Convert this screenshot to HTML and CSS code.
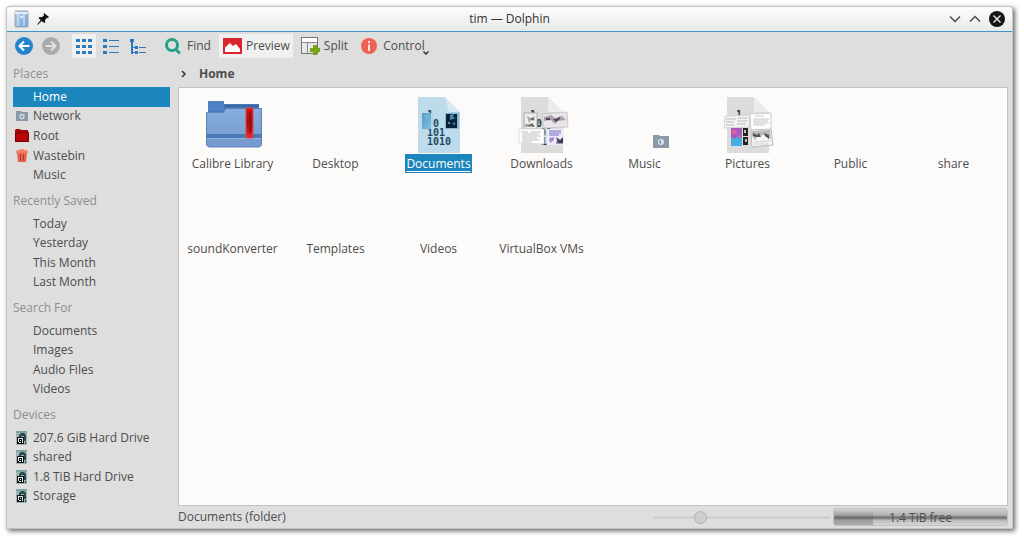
FILE: index.html
```html
<!DOCTYPE html>
<html lang="en">
<head>
  <meta charset="UTF-8">
  <title>tim — Dolphin</title>
  <link rel="stylesheet" href="styles.css">
</head>
<body>
  <!-- shared symbols -->
  <svg class="defs" aria-hidden="true">
    <defs>
      <linearGradient id="blue" x1="0" y1="0" x2="0" y2="1">
        <stop offset="0" stop-color="#86aede"/><stop offset="1" stop-color="#7599ca"/>
      </linearGradient>
      <linearGradient id="ribbon" x1="0" y1="0" x2="0" y2="1">
        <stop offset="0" stop-color="#e01212"/><stop offset="0.5" stop-color="#a80a0a"/><stop offset="1" stop-color="#e8282a"/>
      </linearGradient>
      <linearGradient id="cabinet" x1="0" y1="0" x2="1" y2="1">
        <stop offset="0" stop-color="#b9d3ee"/><stop offset="1" stop-color="#6fa3d8"/>
      </linearGradient>
      <linearGradient id="sky" x1="0" y1="0" x2="1" y2="1">
        <stop offset="0" stop-color="#4c9bc6"/><stop offset="1" stop-color="#8fc4e2"/>
      </linearGradient>
    </defs>
    <symbol id="drive" viewBox="0 0 11 14">
      <rect width="11" height="14" fill="#9db4b5"/>
      <path d="M0 0h11v2H0z" fill="#7fa3a3"/>
      <path d="M3 4l2-2h3l2 2v6H8V5H5v1H3z" fill="#294a50"/>
      <path d="M1 6h7v7H1z" fill="#111"/>
      <path d="M2 7h5v1H2zM2 8h1v3H2zM6 8h1v4H6zM3 11h2v1H3zM4 9h1v1H4z" fill="#e4eeee"/>
      <path d="M9 11h1v2H9z" fill="#243c3f"/>
    </symbol>
  </svg>

  <div class="window">
    <header class="titlebar">
      <div class="title-left">
        <svg width="16" height="18" viewBox="0 0 16 18">
          <rect x="1" y="1" width="13" height="16" rx="1" fill="url(#cabinet)" stroke="#9aa5b0"/>
          <path d="M4 2v14M10 2v14" stroke="#e4f0fb" stroke-width="1"/>
          <path d="M1 3h13" stroke="#e8edf2" stroke-width="2"/>
          <path d="M6 6h3v2H6z" fill="#dcecfa"/>
        </svg>
        <svg width="12" height="12" viewBox="0 0 12 12">
          <path d="M7 0l5 4-1 1-1-0.3L8 7l0.2 2.2L7.200 10 4.800 8 1 11.500 0 12l0.500-1L3.700 7.100 1.500 5l1-1L5 4.200 7.200 2 6.500 1z" fill="#111"/>
        </svg>
      </div>
      <h1>tim — Dolphin</h1>
      <div class="title-buttons">
        <button aria-label="Minimize"><svg width="12" height="8" viewBox="0 0 12 8"><path d="M1 1.500l5 5 5-5" fill="none" stroke="#444" stroke-width="1.300"/></svg></button>
        <button aria-label="Maximize"><svg width="12" height="8" viewBox="0 0 12 8"><path d="M1 6.500l5-5 5 5" fill="none" stroke="#444" stroke-width="1.300"/></svg></button>
        <button aria-label="Close"><svg width="16" height="16" viewBox="0 0 16 16"><circle cx="8" cy="8" r="8" fill="#151515"/><path d="M4.500 4.500l7 7M11.500 4.500l-7 7" stroke="#f4f4f4" stroke-width="1.300"/></svg></button>
      </div>
    </header>

    <nav class="toolbar">
      <button aria-label="Back"><svg width="18" height="18" viewBox="0 0 18 18"><circle cx="9" cy="9" r="9" fill="#2384ce"/><path d="M14.500 9h-10M9 4.500L4.500 9 9 13.500" fill="none" stroke="#fff" stroke-width="2"/></svg></button>
      <button aria-label="Forward" class="forward"><svg width="18" height="18" viewBox="0 0 18 18"><circle cx="9" cy="9" r="9" fill="#aaa"/><path d="M3.500 9h10M9 4.500l4.500 4.500L9 13.500" fill="none" stroke="#e0e0e0" stroke-width="2"/></svg></button>
      <button aria-label="Icons" class="mode active"><svg width="16" height="17" viewBox="0 0 16 17"><path d="M0 1h4v3H0zM6 1h4v3H6zM12 1h4v3h-4zM0 7h4v3H0zM6 7h4v3H6zM12 7h4v3h-4zM0 13h4v3H0zM6 13h4v3H6zM12 13h4v3h-4z" fill="#2c78bd"/></svg></button>
      <button aria-label="Compact" class="mode"><svg width="16" height="17" viewBox="0 0 16 17"><path d="M0 1h4v3H0zM0 7h4v3H0zM0 13h4v3H0zM6 2h10v1H6zM6 8h10v1H6zM6 14h10v1H6z" fill="#2c78bd"/></svg></button>
      <button aria-label="Details" class="mode"><svg width="16" height="17" viewBox="0 0 16 17"><path d="M0 1h4v3H0zM1 4h2v12H1zM3 9h2v1H3zM3 14h2v1H3zM5 8h3v3H5zM5 13h3v3H5zM9 9h7v1H9zM9 14h7v1H9z" fill="#2c78bd"/></svg></button>
      <button class="find"><svg width="16" height="17" viewBox="0 0 16 17"><circle cx="7" cy="7" r="5.500" fill="none" stroke="#26a187" stroke-width="3"/><path d="M10.500 11l4.500 4.500" stroke="#26a187" stroke-width="3"/></svg>Find</button>
      <button class="preview active"><svg width="19" height="16" viewBox="0 0 19 16"><rect width="19" height="16" fill="#d8262c"/><path d="M2 14V9.500L7 5l3 3 3-2 4 5v3z" fill="#fff"/></svg>Preview</button>
      <button class="split"><svg width="19" height="18" viewBox="0 0 19 18"><rect x="0.500" y="0.500" width="16" height="16" fill="#e9e9e9" stroke="#777"/><path d="M1 1h15v4H1z" fill="#fff"/><path d="M1 5.500h15M6.500 5.500v11" stroke="#888"/><path d="M12 8h4v3h3v4h-3v3h-4v-3H9v-4h3z" fill="#77a51a"/></svg>Split</button>
      <button class="control"><svg width="16" height="16" viewBox="0 0 16 16"><circle cx="8" cy="8" r="8" fill="#ee6254"/><path d="M7 3h2v2H7zM7 6.500h2V13H7z" fill="#ffe4df"/></svg>Control<svg class="caret" width="6" height="4" viewBox="0 0 6 4"><path d="M0.500 0.500L3 3l2.500-2.500" fill="none" stroke="#333" stroke-width="1.500"/></svg></button>
    </nav>

    <div class="content">
      <aside class="sidebar">
        <h2>Places</h2>
        <ul class="places">
          <li><a href="#" class="selected">Home</a></li>
          <li><a href="#"><svg width="12" height="10" viewBox="0 0 12 10"><path d="M0 0h5l1 1h6v9H0z" fill="#8999a8"/><circle cx="6" cy="5.500" r="2" fill="none" stroke="#d8dfe5" stroke-width="1.300"/></svg>Network</a></li>
          <li><a href="#"><svg class="wide" width="14" height="13" viewBox="0 0 14 13"><path d="M0 1l1-1h4l1 1h7v2l1 1v8l-1 1H0z" fill="#a60808"/><path d="M0.500 4.500L5 3.500h8.500v9H0.500z" fill="#b80707" stroke="#740000"/></svg>Root</a></li>
          <li><a href="#"><svg width="12" height="13" viewBox="0 0 12 13"><path d="M4 0h4v1h3l1 2v1H0V3l1-2h3z" fill="#f3836d"/><path d="M1 4h10l-1 9H2z" fill="#e8634f"/><path d="M4.500 5.500v6M7.500 5.500v6" stroke="#a93a2c" stroke-width="1"/></svg>Wastebin</a></li>
          <li><a href="#">Music</a></li>
        </ul>
        <h2>Recently Saved</h2>
        <ul>
          <li><a href="#">Today</a></li>
          <li><a href="#">Yesterday</a></li>
          <li><a href="#">This Month</a></li>
          <li><a href="#">Last Month</a></li>
        </ul>
        <h2>Search For</h2>
        <ul>
          <li><a href="#">Documents</a></li>
          <li><a href="#">Images</a></li>
          <li><a href="#">Audio Files</a></li>
          <li><a href="#">Videos</a></li>
        </ul>
        <h2>Devices</h2>
        <ul>
          <li><a href="#"><svg width="11" height="14"><use href="#drive"/></svg>207.6 GiB Hard Drive</a></li>
          <li><a href="#"><svg width="11" height="14"><use href="#drive"/></svg>shared</a></li>
          <li><a href="#"><svg width="11" height="14"><use href="#drive"/></svg>1.8 TiB Hard Drive</a></li>
          <li><a href="#"><svg width="11" height="14"><use href="#drive"/></svg>Storage</a></li>
        </ul>
      </aside>

      <main>
        <div class="breadcrumb">
          <svg width="5" height="8" viewBox="0 0 5 8"><path d="M1 1l3 3-3 3" fill="none" stroke="#333" stroke-width="1.500"/></svg>
          <a href="#">Home</a>
        </div>
        <div class="view">
          <a href="#" class="item">
            <svg width="64" height="56" viewBox="0 0 64 56">
              <path d="M7 4h16v3h35v12H7z" fill="#4778b8"/>
              <path d="M7 4h16v10H7z" fill="#4f82c4"/>
              <path d="M24 8h34v2H24z" fill="#3c69a6"/>
              <path d="M5.500 15.500H22l3-4h35.500V48l-2 2h-51l-2-2z" fill="url(#blue)" stroke="#5c82b6"/>
              <path d="M6 37h54v4H6z" fill="#4a78b5"/>
              <path d="M6 41h54v1H6z" fill="#95b6df"/>
              <rect x="45" y="11" width="7" height="30" fill="url(#ribbon)" stroke="#d7484e"/>
              <path d="M48 14h2v22h-2z" fill="#9d0c10"/>
            </svg>
            <span>Calibre Library</span>
          </a>
          <a href="#" class="item"><span>Desktop</span></a>
          <a href="#" class="item selected">
            <svg width="64" height="56" viewBox="0 0 64 56">
              <path d="M11 0h27l15 15v41H11z" fill="#bddbea"/>
              <path d="M38 0l15 15H42z" fill="#d7eaf3"/>
              <path d="M42 15h11v11z" fill="#acd0e2"/>
              <g class="digits" fill="#1c4a66">
                <text x="20" y="21">1</text>
                <text x="20" y="30">10</text>
                <text x="20" y="39">101</text>
                <text x="20" y="48">1010</text>
              </g>
              <rect x="15" y="16" width="11" height="16" fill="url(#sky)"/>
              <path d="M17 18l5-1 3 5-5 4z" fill="#70b2d6"/>
              <path d="M24 16h2v16h-2z" fill="#b3d5e7"/>
              <rect x="38" y="16" width="14" height="16" fill="#8bb9d1"/>
              <rect x="39" y="17" width="11" height="14" fill="#07233a"/>
              <path d="M43 18l4-1-1 3 3 1-6 2zM41 25h2v2h-2zM45 27l3-2v3z" fill="#4b8db4"/>
            </svg>
            <span>Documents</span>
          </a>
          <a href="#" class="item">
            <svg width="64" height="56" viewBox="0 0 64 56">
              <path d="M11 0h27l15 15v41H11z" fill="#dcdcdc"/>
              <path d="M38 0l15 15H38z" fill="#ececec"/>
              <g class="digits" fill="#333"><text x="20" y="21">1</text><text x="20" y="30">10</text><text x="30" y="39">01</text><text x="31" y="48">10</text></g>
              <rect x="14" y="16" width="13" height="16" fill="#eee" stroke="#aaa"/>
              <path d="M17 19l4 2 4-2-1 5-3-1-2 3zM15 27h5v3h-5z" fill="#a9aaa5"/>
              <path d="M21 21h3v2h-3zM18 29l4-3 3 4z" fill="#65695f"/>
              <path d="M32 17l25-2 1 15-24 1z" fill="#e9e5e9" stroke="#c9c7c9"/>
              <path d="M34 20l7-2 4 3 7-2 4 4-8 1-3 3-4-4-7 1z" fill="#aaa0ab"/>
              <path d="M36 21h4v2h-4zM43 22l3 3 4-3v-2l-4 2z" fill="#514453"/>
              <path d="M9 32h25v15l-25-1z" fill="#fff" stroke="#ddd"/>
              <path d="M11 35h7M20 35h11M12 37h17M12 39h19M12 41h15M12 43h18M12 45h10" stroke="#bfc0c4" stroke-width="1"/>
              <rect x="37" y="32" width="17" height="16" fill="#eeeaf8"/>
              <path d="M39 34h12M39 36h12M39 38h10" stroke="#726cc0" stroke-width="1"/>
              <path d="M39 41l5-1v3l-4 3zM46 44h7v3h-7z" fill="#9e91ca"/>
              <path d="M46 40l4 3 3-3v6h-5z" fill="#414052"/>
            </svg>
            <span>Downloads</span>
          </a>
          <a href="#" class="item">
            <svg class="small" width="16" height="13" viewBox="0 0 16 13"><path d="M0 0h6l1 1h9v12H0z" fill="#8a9aa8"/><circle cx="8" cy="7" r="3" fill="#dce4ea"/><path d="M8 5L6 7l2 2z" fill="#657889"/></svg>
            <span>Music</span>
          </a>
          <a href="#" class="item">
            <svg width="64" height="56" viewBox="0 0 64 56">
              <path d="M11 0h27l15 15v41H11z" fill="#dcdcdc"/>
              <path d="M38 0l15 15H38z" fill="#ececec"/>
              <g class="digits" fill="#333"><text x="20" y="21">1</text></g>
              <path d="M9 19l24-1v12l-25 1z" fill="#f3f3f4" stroke="#d5d5d5"/>
              <path d="M10 22h10M22 21h9M10 25h8M21 24h10M10 28h8M21 27h9" stroke="#b7b8bd"/>
              <path d="M34 17l21-1v17l-20 1z" fill="#fff" stroke="#ccc"/>
              <path d="M39 19h9M37 22h16M37 24h15M37 26h16M37 28h12" stroke="#c3c4c8" stroke-width="1"/>
              <rect x="15" y="31" width="11" height="18" fill="#45afe2"/>
              <path d="M15 31h11v9l-4-2-3 4-4-2z" fill="#a45bc0"/>
              <path d="M16 33h5v4h-5zM22 38h3v3h-3z" fill="#e35aa0"/>
              <rect x="27" y="31" width="5" height="8" fill="#222"/>
              <rect x="27" y="40" width="5" height="8" fill="#222"/>
              <path d="M28 33h2v3h-2zM29 42h2v3h-2z" fill="#bbb"/>
              <path d="M35 33l20-1 2 16-21 2z" fill="#f5f5f5" stroke="#bbb"/>
              <path d="M36 34l18-1 1 9-3-1-3-3-7 1-3 4-3-4z" fill="#bbb"/>
              <path d="M37 36l4 2 2-2 2 4h-5l-3-1zM48 36l5 2v4l-4-3z" fill="#555"/>
              <path d="M38 45l16-1M38 47h14" stroke="#d0d0d0"/>
            </svg>
            <span>Pictures</span>
          </a>
          <a href="#" class="item"><span>Public</span></a>
          <a href="#" class="item"><span>share</span></a>
          <a href="#" class="item"><span>soundKonverter</span></a>
          <a href="#" class="item"><span>Templates</span></a>
          <a href="#" class="item"><span>Videos</span></a>
          <a href="#" class="item"><span>VirtualBox VMs</span></a>
        </div>
        <footer class="statusbar">
          <span class="status">Documents (folder)</span>
          <input type="range" min="0" max="100" value="25" aria-label="Zoom">
          <div class="space">1.4 TiB free</div>
        </footer>
      </main>
    </div>
  </div>
</body>
</html>
```

FILE: styles.css
```css
* {
  box-sizing: border-box;
}
body {
  margin: 0;
  padding: 6px 11px 11px 6px;
  height: 100vh;
  background: #fff;
  color: #4d4d4d;
  font: 12px/18px "Open Sans", sans-serif;
}
a {
  color: inherit;
  text-decoration: none;
}
button {
  display: flex;
  align-items: center;
  padding: 0;
  border: 0;
  background: none;
  color: inherit;
  font: inherit;
}
h1, h2 {
  margin: 0;
  font-size: 12px;
  font-weight: normal;
}
.defs {
  position: absolute;
  width: 0;
  height: 0;
}
.window {
  display: flex;
  flex-direction: column;
  height: 100%;
  border: 1px solid #c4c4c4;
  border-radius: 3px 3px 0 0;
  background: #dedede;
  box-shadow: 2px 2px 5px rgba(0, 0, 0, 0.6);
}

/* title bar */
.titlebar {
  display: grid;
  grid-template-columns: 1fr auto 1fr;
  align-items: center;
  height: 25px;
  padding: 0 7px;
  border-bottom: 1px solid #3d97c3;
  border-radius: 3px 3px 0 0;
  background: linear-gradient(#fdfdfd, #e9e9e9);
}
.titlebar h1 {
  color: #333;
}
.title-left {
  display: flex;
  align-items: center;
  gap: 7px;
}
.title-buttons {
  display: flex;
  justify-content: flex-end;
  align-items: center;
  gap: 8px;
}

/* toolbar */
.toolbar {
  display: flex;
  align-items: center;
  height: 29px;
  padding: 0 8px 1px;
}
.toolbar button {
  height: 24px;
}
.toolbar .active {
  background: #f0f0f0;
}
.toolbar .forward {
  margin: 0 12px 0 9px;
}
.toolbar .mode {
  justify-content: center;
  width: 27px;
}
.toolbar .mode.active {
  width: 24px;
  margin-right: 1px;
}
.toolbar .find {
  gap: 6px;
  margin: 0 8px 0 14px;
}
.toolbar .preview {
  gap: 4px;
  padding: 0 3px 0 4px;
}
.toolbar .split {
  gap: 4px;
  margin: 0 13px 0 8px;
}
.toolbar .control {
  gap: 6px;
}
.caret {
  align-self: flex-end;
  margin: 0 0 3px -8px;
}

.content {
  display: flex;
  flex: 1;
  min-height: 0;
}

/* places panel */
.sidebar {
  flex: 0 0 171px;
  padding: 0 8px 0 6px;
}
.sidebar h2 {
  height: 29px;
  padding-top: 7px;
  color: #8e8e8e;
}
.sidebar h2:first-child {
  height: 26px;
  padding-top: 4px;
}
.sidebar ul {
  display: grid;
  height: 78px;
  margin: 0;
  padding: 0;
  list-style: none;
}
.sidebar .places {
  height: 98px;
}
.sidebar a {
  display: flex;
  align-items: center;
  position: relative;
  height: 100%;
  padding-left: 20px;
}
.sidebar svg {
  position: absolute;
  left: 3px;
}
.sidebar .wide {
  left: 2px;
}
.sidebar .selected {
  background: #1b85bd;
  color: #fff;
}

/* folder view */
main {
  display: flex;
  flex: 1;
  flex-direction: column;
  padding-right: 4px;
}
.breadcrumb {
  display: flex;
  align-items: center;
  gap: 13px;
  height: 26px;
  padding-left: 3px;
  font-weight: bold;
}
.view {
  display: grid;
  flex: 1;
  grid-template-columns: repeat(8, 1fr);
  grid-auto-rows: 85px;
  align-content: start;
  padding: 9px 2px 0;
  border: 1px solid #c3c3c0;
  background: #fcfbf9;
}
.item {
  display: flex;
  flex-direction: column;
  align-items: center;
  justify-content: flex-end;
  height: 76px;
}
.item span {
  height: 19px;
  margin-top: 1px;
  padding: 0 1px;
  line-height: 19px;
  white-space: nowrap;
}
.item svg {
  flex: none;
}
.item .small {
  margin: 0 0 5px 33px;
}
.item.selected span {
  background: #1b85bd;
  color: #fff;
  text-decoration: underline;
  text-underline-offset: 3px;
}
.digits {
  font: bold 10px "DejaVu Sans Mono", monospace;
}

/* status bar */
.statusbar {
  display: flex;
  align-items: center;
  height: 22px;
}
.status {
  flex: 1;
}
input[type="range"] {
  width: 177px;
  height: 13px;
  margin: 0 3px 0 0;
  background: none;
  appearance: none;
}
input[type="range"]::-webkit-slider-runnable-track {
  height: 3px;
  border-radius: 2px;
  background: #d0d0d0;
}
input[type="range"]::-webkit-slider-thumb {
  width: 13px;
  height: 13px;
  margin-top: -5px;
  border: 1px solid #b0b0b0;
  border-radius: 50%;
  background: #cfcfcf;
  appearance: none;
}
.space {
  width: 175px;
  height: 18px;
  border: 1px solid #c2c2c2;
  border-radius: 3px;
  background:
    linear-gradient(rgba(255, 255, 255, 0.1), rgba(90, 90, 90, 0.3) 50%, rgba(110, 110, 110, 0.4)) 0 0 / 39px 100% no-repeat,
    linear-gradient(#d0d0d0, #b0b0b0 40%, #727272 50%, #858585 60%, #bcbcbc 70%, #d6d6d6);
  text-align: center;
}
```
